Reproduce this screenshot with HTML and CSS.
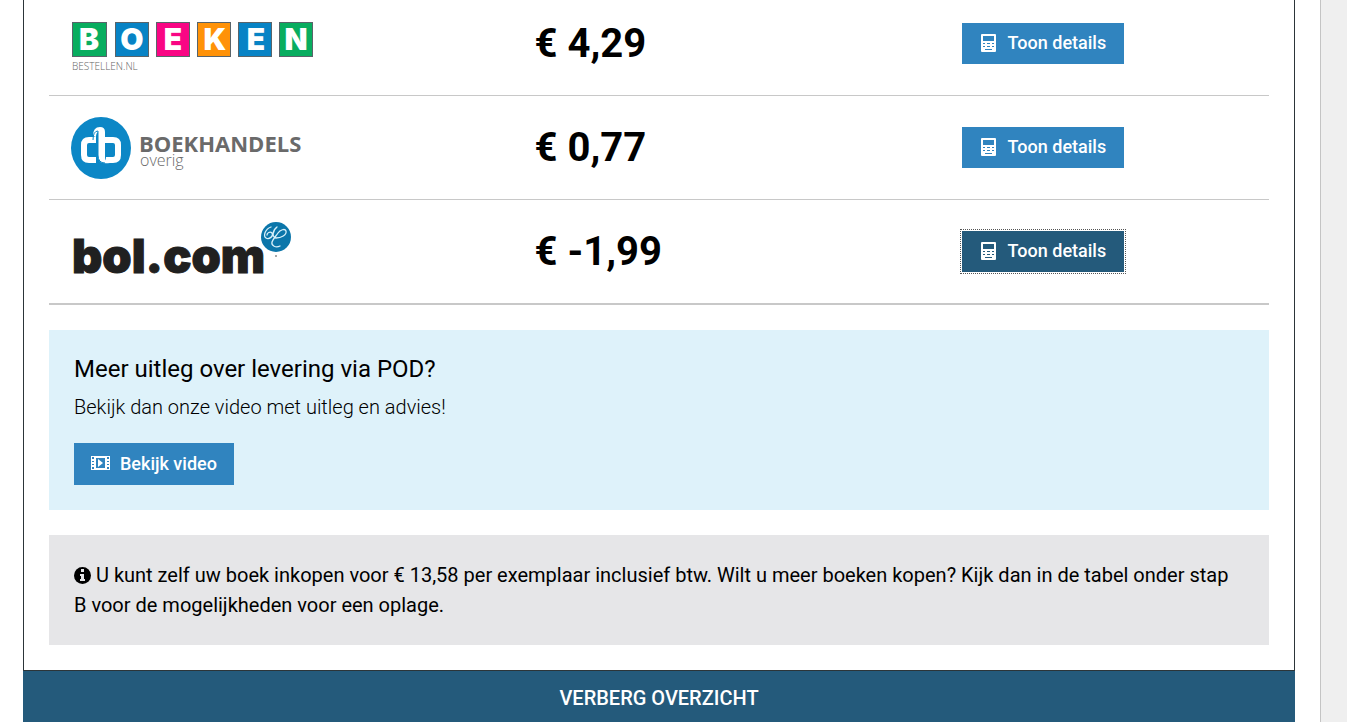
FILE: index.html
```
<!DOCTYPE html>
<html lang="nl">
<head>
<meta charset="utf-8">
<meta name="viewport" content="width=device-width, initial-scale=1">
<title>Overzicht</title>
<link rel="stylesheet" href="styles.css">
</head>
<body>
<svg class="sprite" aria-hidden="true">
  <symbol id="calculator" viewBox="0 0 15 18">
    <path fill="currentColor" fill-rule="evenodd" d="M1 0h13q1 0 1 1v16q0 1-1 1H1q-1 0-1-1V1q0-1 1-1zM2 2v5h11V2zM2 9v1h2V9zM6 9v1h3V9zM11 9v1h2V9zM2 12v1h2v-1zM6 12v1h3v-1zM11 12v1h2v-1zM4 15v1h7v-1z"/>
  </symbol>
</svg>
<main class="page">
  <section class="panel">
    <div class="content">
      <table class="prices">
        <tbody>
          <tr>
            <td class="shop">
              <svg class="logo" width="250" height="60" viewBox="0 0 250 60" role="img" aria-label="Boeken bestellen.nl">
                <g stroke="#59646a" stroke-width="1">
                  <rect x="1.500" y="8.500" width="34" height="34" fill="#08ad5f"/>
                  <rect x="44.500" y="8.500" width="33" height="34" fill="#0783c5"/>
                  <rect x="85.500" y="8.500" width="33" height="34" fill="#f90684"/>
                  <rect x="126.500" y="8.500" width="33" height="34" fill="#ff9208"/>
                  <rect x="167.500" y="8.500" width="33" height="34" fill="#0783c5"/>
                  <rect x="208.500" y="8.500" width="33" height="34" fill="#08ad5f"/>
                </g>
                <g class="tile-text">
                  <text x="18" y="36">B</text><text x="61" y="36">O</text><text x="102" y="36">E</text><text x="144" y="36">K</text><text x="185" y="36">E</text><text x="225" y="36">N</text>
                </g>
                <text class="tile-sub" x="1" y="56">BESTELLEN.NL</text>
              </svg>
            </td>
            <td class="price">€ 4,29</td>
            <td class="action"><button type="button" class="btn"><svg class="icon-calc"><use href="#calculator"/></svg>Toon details</button></td>
          </tr>
          <tr>
            <td class="shop">
              <svg class="logo" width="250" height="64" viewBox="0 0 250 64" role="img" aria-label="Boekhandels overig">
                <ellipse cx="30" cy="32" rx="30" ry="31" fill="#0c87c6"/>
                <g fill="none" stroke="#fff" stroke-width="6">
                  <path d="M25 24h-7q-5 0-5 5v10q0 5 5 5h7"/>
                  <path d="M34 24h8q5 0 5 5v10q0 5-5 5h-7"/>
                </g>
                <path d="M22 20q0-9 7-9 5 0 5 5v25q0 5 5 6-12 2-12-7V16q-2 1-2 5z" fill="#fff"/>
                <path d="M22 24q0-9 5-9v24q0 8 7 8" fill="none" stroke="#0c87c6" stroke-width="1"/>
                <text class="cb-title" x="68" y="36">BOEKHANDELS</text>
                <text class="cb-sub" x="69" y="50">overig</text>
              </svg>
            </td>
            <td class="price">€ 0,77</td>
            <td class="action"><button type="button" class="btn"><svg class="icon-calc"><use href="#calculator"/></svg>Toon details</button></td>
          </tr>
          <tr>
            <td class="shop">
              <svg class="logo" width="250" height="60" viewBox="0 0 250 60" role="img" aria-label="bol.com">
                <text class="bol" x="1" y="51">bol.com</text>
                <circle cx="205" cy="15" r="15" fill="#0b76aa"/>
                <path d="M200 5c-6 2-8 9-5 11s8-2 6-5c-2-2-5 0-5 2M206 5c-5 4-5 10-1 11 5 0 11-3 10-7-1-3-6-1-8 2s-5 6-6 9c-1 4 4 6 8 4" fill="none" stroke="#d9f1fa" stroke-width="1.300" stroke-linecap="round"/>
                <circle cx="205" cy="34" r="1" fill="#8b8b8b"/>
              </svg>
            </td>
            <td class="price">€ -1,99</td>
            <td class="action"><button type="button" class="btn btn-active"><svg class="icon-calc"><use href="#calculator"/></svg>Toon details</button></td>
          </tr>
        </tbody>
      </table>
      <section class="box video-box">
        <h2>Meer uitleg over levering via POD?</h2>
        <p>Bekijk dan onze video met uitleg en advies!</p>
        <a class="btn btn-video" href="#video"><svg class="icon-film" viewBox="0 0 19 14" aria-hidden="true"><path fill="currentColor" fill-rule="evenodd" d="M0 0h19v14H0zM1 1v2h2V1zM1 5v1h2V5zM1 8v1h2V8zM1 11v2h2v-2zM16 1v2h2V1zM16 5v1h2V5zM16 8v1h2V8zM16 11v2h2v-2zM5 2v10h9V2z"/><path fill="currentColor" d="M7 3l5 4-5 4z"/></svg>Bekijk video</a>
      </section>
      <section class="box info-box">
        <p><svg class="icon-info" viewBox="0 0 17 17" aria-hidden="true"><circle cx="8.500" cy="8.500" r="8.500"/><path fill="#e6e6e8" d="M7 2h3v3H7zM6 7h4v5h1v2H6v-2h1V9H6z"/></svg> U kunt zelf uw boek inkopen voor € 13,58 per exemplaar inclusief btw. Wilt u meer boeken kopen? Kijk dan in de tabel onder stap B voor de mogelijkheden voor een oplage.</p>
      </section>
    </div>
    <button type="button" class="toggle">VERBERG OVERZICHT</button>
  </section>
</main>
</body>
</html>
```
FILE: styles.css
```
* { box-sizing: border-box; }
body {
  margin: 0;
  background: #efefef;
  color: #000;
  font-family: Roboto, "Liberation Sans", sans-serif;
  font-size: 20px;
}
.sprite { display: none; }
.page {
  min-height: 100vh;
  margin-right: 26px;
  padding: 0 25px 0 23px;
  background: #fff;
  border-right: 1px solid #c4c4c4;
}
.content {
  padding: 0 25px 25px;
  border: 1px solid #2c3539;
  border-top: 0;
}
.prices {
  width: 100%;
  table-layout: fixed;
  border-collapse: separate;
  border-spacing: 0;
  border-bottom: 1px solid #c8c8c8;
}
.prices td {
  height: 104px;
  padding: 0 0 0 22px;
  border-bottom: 1px solid #c8c8c8;
  vertical-align: middle;
}
.prices tr:first-child td { height: 96px; padding-bottom: 8px; }
.prices .shop { width: 38%; }
.prices .price { width: 35%; font-size: 40px; font-weight: 700; line-height: 48px; }
.logo { display: block; overflow: visible; }
.tile-text { fill: #fff; font: 900 30px Inter, sans-serif; text-anchor: middle; }
.tile-sub { fill: #666; font: 300 10px "Open Sans", sans-serif; }
.cb-title { fill: #6a6a6a; font: 700 22px "Open Sans", sans-serif; }
.cb-sub { fill: #6a6a6a; font: 300 16px "Open Sans", sans-serif; }
.bol { fill: #202020; stroke: #202020; stroke-width: 1px; font: 900 47px Inter, sans-serif; }
.btn {
  display: inline-flex;
  align-items: center;
  height: 41px;
  padding: 0 18px 2px 19px;
  border: 0;
  background: #3084bf;
  color: #fff;
  font: 500 18px Roboto, sans-serif;
  text-decoration: none;
  cursor: pointer;
}
.btn-active { background: #245a7b; outline: 1px dotted #555; outline-offset: 1px; }
.icon-calc { width: 15px; height: 18px; margin-right: 12px; }
.icon-film { width: 19px; height: 14px; margin-right: 10px; }
.box { margin-top: 25px; padding: 25px; }
.video-box { background: #def2fa; }
.video-box h2 { margin: 0 0 12px; font-size: 24px; font-weight: 400; line-height: 28px; }
.video-box p { margin: 0 0 23px; font-size: 20px; font-weight: 300; line-height: 25px; }
.btn-video { display: flex; width: max-content; height: 42px; padding: 0 17px 2px; }
.info-box { background: #e6e6e8; }
.info-box p { margin: 0; line-height: 30px; }
.icon-info { width: 17px; height: 17px; vertical-align: -2px; }
.toggle {
  display: block;
  width: 100%;
  height: 54px;
  border: 0;
  background: #245a7b;
  color: #fff;
  font: 500 20px Roboto, sans-serif;
  cursor: pointer;
}
```
